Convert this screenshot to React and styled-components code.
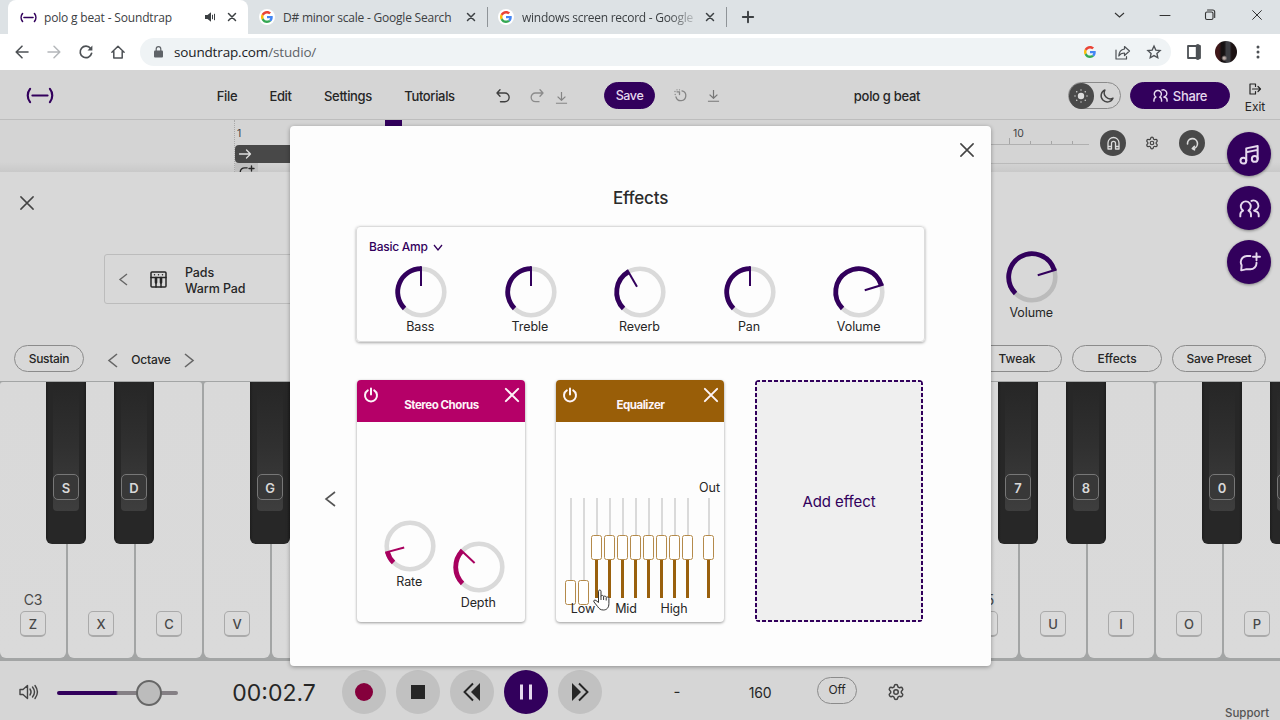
import React from "react";
import styled, { createGlobalStyle, css } from "styled-components";
import { Settings } from "lucide-react";

const purple = "#32005c";
const ink = "#262626";

const GlobalStyle = createGlobalStyle`
    * { box-sizing: border-box; }
    body {
        margin: 0;
        overflow: hidden;
        font-family: Inter, "Liberation Sans", sans-serif;
        color: ${ink};
    }
    svg { display: block; flex: none; overflow: visible; }
`

const Page = styled.div`
    position: relative;
    display: flex;
    flex-direction: column;
    width: 1280px;
    height: 720px;
    overflow: hidden;
    background: #d6d6d6;
`

/* fixed cell that centres an icon or a short text */
const Slot = styled.div`
    display: flex;
    flex: none;
    align-items: center;
    justify-content: center;
    width: ${(p) => p.$w}px;
    margin-left: ${(p) => p.$ml || 0}px;
    color: ${(p) => p.$color || "inherit"};
    ${(p) => p.$drop && css`padding-top: ${p.$drop}px;`}
`

const Label = styled.span`
    display: block;
    flex: none;
    white-space: nowrap;
    line-height: 16px;
    font-size: ${(p) => p.$size || 13}px;
    font-weight: ${(p) => p.$weight || 400};
    letter-spacing: ${(p) => p.$track || 0}px;
    color: ${(p) => p.$color || "inherit"};
`

/* ---------- icons ---------- */

const Icon = ({ size = 16, box = 24, stroke = 2, children, fill = "none", cap = "round" }) => (
    <svg width={size} height={size} viewBox={`0 0 ${box} ${box}`} fill={fill}
        stroke={fill === "none" ? "currentColor" : "none"} strokeWidth={stroke}
        strokeLinecap={cap} strokeLinejoin="round">
        {children}
    </svg>
)

const Cross = ({ size, stroke }) => (
    <Icon size={size} box={16} stroke={stroke}><path d="M1 1l14 14M15 1L1 15" /></Icon>
)

const Chevron = ({ w, h, dir, stroke = 1.6 }) => (
    <svg width={w} height={h} viewBox={`0 0 ${w} ${h}`} fill="none" stroke="currentColor" strokeWidth={stroke}>
        {dir === "left" && <path d={`M${w - 1} 1L1 ${h / 2}l${w - 2} ${h / 2 - 1}`} />}
        {dir === "right" && <path d={`M1 1l${w - 2} ${h / 2 - 1}L1 ${h - 1}`} />}
        {dir === "down" && <path d={`M1 1l${w / 2 - 1} ${h - 2}L${w - 1} 1`} />}
    </svg>
)

const Brand = ({ w, h, stroke }) => (
    <svg width={w} height={h} viewBox="0 0 30 18" fill="none" stroke={purple} strokeWidth={stroke} strokeLinecap="round">
        <path d="M4.500 2C1.200 6 1.200 12 4.500 16M25.500 2c3.300 4 3.300 10 0 14M7 9h16" />
    </svg>
)

const Google = ({ size = 12 }) => (
    <svg width={size} height={size} viewBox="0 0 48 48">
        <path fill="#EA4335" d="M24 9.500c3.540 0 6.710 1.220 9.210 3.600l6.850-6.850C35.900 2.380 30.470 0 24 0 14.620 0 6.510 5.380 2.560 13.220l7.980 6.190C12.430 13.720 17.740 9.500 24 9.500z" />
        <path fill="#4285F4" d="M46.980 24.550c0-1.570-.15-3.090-.38-4.550H24v9.020h12.940c-.58 2.960-2.260 5.480-4.780 7.180l7.730 6c4.510-4.180 7.090-10.360 7.090-17.650z" />
        <path fill="#FBBC05" d="M10.530 28.590c-.48-1.450-.76-2.990-.76-4.590s.27-3.140.76-4.590l-7.980-6.190C.92 16.460 0 20.120 0 24s.92 7.540 2.560 10.780l7.970-6.190z" />
        <path fill="#34A853" d="M24 48c6.480 0 11.930-2.130 15.890-5.810l-7.730-6c-2.150 1.450-4.920 2.300-8.160 2.300-6.260 0-11.570-4.220-13.470-9.910l-7.980 6.190C6.510 42.620 14.620 48 24 48z" />
    </svg>
)

const People = ({ size, stroke = 2 }) => (
    <Icon size={size} stroke={stroke}>
        <path d="M1.500 21v-2c0-2.400 1.200-3.600 3.200-4.600A5.700 5.700 0 1 1 10.800 14.400c1.900.8 2.900 2.200 2.900 4.600V21" />
        <path d="M14.200 3.300a5.600 5.600 0 0 1 4.300 10.600l-1.300.6c2.800.4 5.300 2 5.300 4.800V21" />
    </Icon>
)

const Download = ({ size = 14 }) => (
    <Icon size={size} box={14} stroke={1.300} cap="butt"><path d="M7 1v9M2.800 6l4.200 4 4.200-4M1 13.200h12" /></Icon>
)

const Power = () => (
    <Icon size={14} box={14} stroke={2}><path d="M7 .6v6M3.800 2.400a6 6 0 1 0 6.400 0" /></Icon>
)

const Chat = ({ size }) => (
    <Icon size={size} stroke={2.200}>
        <path d="M13 4.500H9a7 7 0 0 0-7 7c0 1.500.5 2.700 1 3.700L2.500 21l5.200-1.200H13a7 7 0 0 0 7-7v-.5" />
        <path d="M20 1.500v8M16 5.500h8" />
    </Icon>
)

/* ---------- browser ---------- */

const TabStrip = styled.div`
    display: flex;
    flex: none;
    height: 34px;
    background: #dde2e5;
    color: #3c4043;
    font-family: "Open Sans", "Noto Sans", sans-serif;
`

const Tab = styled.div`
    display: flex;
    align-items: center;
    flex: none;
    width: ${(p) => p.$w}px;
    margin-left: ${(p) => p.$ml || 0}px;
    background: ${(p) => (p.$active ? "#fff" : "transparent")};
    border-radius: 8px 8px 0 0;
`

const TabTitle = styled.div`
    flex: none;
    white-space: nowrap;
    width: ${(p) => p.$w}px;
    margin-left: 8px;
    padding-top: 1px;
    font-size: 12px;
    line-height: 18px;
    letter-spacing: ${(p) => p.$track || -0.170}px;
    ${(p) => p.$fade && css`mask-image: linear-gradient(90deg, #000 85%, transparent 104%);`}
`

const Favicon = styled.div`
    display: grid;
    place-items: center;
    width: 16px;
    height: 16px;
    border-radius: 50%;
    background: #fff;
`

const Divider = styled.div`
    width: 1px;
    height: 20px;
    margin-top: 7px;
    background: #8f9498;
`

const WindowControls = styled.div`
    display: flex;
    margin-left: auto;
    height: 30px;
    color: #333;
`

const AddressRow = styled.div`
    display: flex;
    align-items: center;
    flex: none;
    height: 36px;
    padding-left: 6px;
    background: #fff;
    color: #4d5155;
`

const Omnibox = styled.div`
    display: flex;
    align-items: center;
    width: 1031px;
    height: 28px;
    margin-left: 6px;
    padding-left: 10px;
    padding-right: 1px;
    border-radius: 14px;
    background: #eff3f5;
    font-family: "Open Sans", "Noto Sans", sans-serif;
`

const Url = styled.div`
    flex: 1;
    margin-left: 8px;
    font-size: 13.500px;
    letter-spacing: -0.150px;
    color: #5f6368;
    b { font-weight: 400; color: #202124; }
`

const Avatar = styled.div`
    width: 22px;
    height: 22px;
    border-radius: 50%;
    background:
        radial-gradient(circle at 42% 78%, #b9aaa6 0 1px, transparent 3px),
        linear-gradient(90deg, #40181a 0 18%, #151112 30% 42%, #3c3d42 52% 66%, #1b1112 76%);
`

const Browser = () => (
    <>
        <TabStrip>
            <Tab $w={240} $ml={8} $active>
                <Slot $w={16} $ml={12}><Brand w={17} h={11} stroke={2.800} /></Slot>
                <TabTitle $w={150}>polo g beat - Soundtrap</TabTitle>
                <Slot $w={16} $ml={8}>
                    <svg width="11" height="10" viewBox="0 0 11 10" fill="#3c4043">
                        <path d="M0 3h2.500L6 .3v9.400L2.500 7H0z" />
                        <path d="M7.500 2.800v4.400M9.500 1.800v6.400" stroke="#3c4043" fill="none" />
                    </svg>
                </Slot>
                <Slot $w={20} $ml={4}><Cross size={8} stroke={3} /></Slot>
            </Tab>
            <Tab $w={239}>
                <Slot $w={16} $ml={11}><Favicon><Google /></Favicon></Slot>
                <TabTitle $w={172} $track={-0.220}>D# minor scale - Google Search</TabTitle>
                <Slot $w={20} $ml={6}><Cross size={8} stroke={3} /></Slot>
            </Tab>
            <Divider />
            <Tab $w={238}>
                <Slot $w={16} $ml={10}><Favicon><Google /></Favicon></Slot>
                <TabTitle $w={172} $track={-0.270} $fade>windows screen record - Google</TabTitle>
                <Slot $w={20} $ml={6}><Cross size={8} stroke={3} /></Slot>
            </Tab>
            <Divider />
            <Slot $w={42}><Icon size={12} box={12} stroke={1.900}><path d="M6 .8v10.400M.8 6h10.400" /></Icon></Slot>
            <WindowControls>
                <Slot $w={46}><Chevron w={11} h={6} dir="down" stroke={1.100} /></Slot>
                <Slot $w={45}><Icon size={10} box={10} stroke={1}><path d="M0 5.500h10" /></Icon></Slot>
                <Slot $w={46}><Icon size={10} box={10} stroke={1.100}><rect x=".5" y="2" width="7.500" height="7.500" rx="1.500" /><path d="M2.500 0h5.200A2 2 0 0 1 9.700 2v5.500" /></Icon></Slot>
                <Slot $w={47}><Cross size={10} stroke={1.600} /></Slot>
            </WindowControls>
        </TabStrip>
        <AddressRow>
            <Slot $w={32}><Icon size={14} box={14} stroke={1.600}><path d="M13 7H1.500M7 1.200L1.200 7 7 12.800" /></Icon></Slot>
            <Slot $w={32} $color="#b4b7ba"><Icon size={14} box={14} stroke={1.500}><path d="M1 7h11.500M7 1.200L12.800 7 7 12.800" /></Icon></Slot>
            <Slot $w={32}>
                <Icon size={14} box={14} stroke={1.700}><path d="M12.600 8.300A5.800 5.800 0 1 1 11.600 3.400" /><path d="M13.400.6v4.900H8.500z" fill="currentColor" stroke="none" /></Icon>
            </Slot>
            <Slot $w={32}><Icon size={14} box={14} stroke={1.500}><path d="M.9 7.300L7 1.300l6.100 6M2.800 6.500V13h8.400V6.500" /></Icon></Slot>
            <Omnibox>
                <Slot $w={16}>
                    <svg width="9" height="12" viewBox="0 0 9 12" fill="#5f6368">
                        <rect y="4.500" width="9" height="7" rx="1" />
                        <path d="M2.200 5V3a2.300 2.300 0 0 1 4.600 0v2" fill="none" stroke="#5f6368" strokeWidth="1.200" />
                    </svg>
                </Slot>
                <Url><b>soundtrap.com</b>/studio/</Url>
                <Slot $w={32}><Google size={12} /></Slot>
                <Slot $w={32}><Icon size={15} box={15} stroke={1.200}><path d="M1 5v9h10.500v-2.500M9.500 1.500L14.500 6l-5 4.500V8C6.500 8 5 9 3.800 11 4 7 6.200 4.500 9.500 4z" /></Icon></Slot>
                <Slot $w={32}><Icon size={14} stroke={2.300}><path d="M12 1.800l3.100 6.900 7.400.8-5.500 5 1.500 7.400-6.500-3.800-6.500 3.800L7 14.500l-5.500-5 7.400-.8z" strokeLinejoin="miter" /></Icon></Slot>
            </Omnibox>
            <Slot $w={32} $ml={7}><Icon size={14} box={14} stroke={1.800}><rect x="1" y="1" width="12" height="12" /><path d="M10.800 1v12" strokeWidth="4" /></Icon></Slot>
            <Slot $w={32}><Avatar /></Slot>
            <Slot $w={32}><Icon size={14} box={14} fill="currentColor"><circle cx="7" cy="2" r="1.500" /><circle cx="7" cy="7" r="1.500" /><circle cx="7" cy="12" r="1.500" /></Icon></Slot>
        </AddressRow>
    </>
)

/* ---------- studio header ---------- */

const Header = styled.header`
    display: flex;
    align-items: center;
    flex: none;
    height: 50px;
    padding-top: 2px;
    padding-left: 25px;
    border-bottom: 1px solid #bdbdbd;
    background: #d5d5d5;
`

const Menu = styled.nav`
    display: flex;
    gap: 32px;
    margin-left: 162px;
    padding-top: 1px;
`

const Pill = styled.button`
    display: flex;
    flex: none;
    align-items: center;
    justify-content: center;
    gap: 5px;
    width: ${(p) => p.$w}px;
    height: 27px;
    margin-left: ${(p) => p.$ml || 0}px;
    margin-top: ${(p) => p.$mt || 0}px;
    padding: 0;
    border: 1px solid ${(p) => (p.$solid ? purple : "#8b8b8b")};
    border-radius: 14px;
    background: ${(p) => (p.$solid ? purple : "transparent")};
    color: ${(p) => (p.$solid ? "#e6d9ee" : ink)};
    font-family: inherit;
`

const ThemeToggle = styled.div`
    display: flex;
    width: 53px;
    height: 27px;
    margin-left: 147px;
    border: 1px solid #8a8a8a;
    border-radius: 14px;
    color: #444;
`

const ThemeKnob = styled.div`
    display: grid;
    place-items: center;
    width: 26px;
    height: 26px;
    margin: -0.500px 0 0 -0.500px;
    border-radius: 50%;
    background: #494949;
    color: #dcdcdc;
`

const Exit = styled.div`
    display: flex;
    flex-direction: column;
    align-items: center;
    gap: 4px;
    width: 24px;
    margin-left: 13px;
    padding-top: 6px;
`

const menuItems = [
    { name: "File", w: 20 },
    { name: "Edit", w: 23 },
    { name: "Settings", w: 48 },
    { name: "Tutorials", w: 51 },
]

const StudioHeader = () => (
    <Header>
        <Slot $w={30}><Brand w={30} h={17} stroke={2.300} /></Slot>
        <Menu>
            {menuItems.map((item) => (
                <Slot $w={item.w} key={item.name}><Label $weight={500} $track={-0.350}>{item.name}</Label></Slot>
            ))}
        </Menu>
        <Slot $w={16} $ml={40} $color="#3f3f3f"><Icon size={14} box={14} stroke={1.400}><path d="M4 .8L1 4l3 3.200M1.200 4h7.600a4.300 4.300 0 1 1 0 8.700H4.500" /></Icon></Slot>
        <Slot $w={16} $ml={18} $color="#8b8b8b"><Icon size={14} box={14} stroke={1.300}><path d="M10 .8L13 4l-3 3.200M12.800 4H5.500a4.300 4.300 0 1 0 0 8.700H9" /></Icon></Slot>
        <Slot $w={14} $ml={9} $color="#858585" $drop={3}><Download size={13} /></Slot>
        <Pill $w={51} $ml={36} $solid><Label $size={12.500} $weight={500} $track={-0.400}>Save</Label></Pill>
        <Slot $w={14} $ml={18} $color="#858585">
            <Icon size={13} box={13} stroke={1.300}><path d="M8 1.800A5 5 0 1 1 2 8M3 2.800h2.500v2.800" /><path d="M1.200 5.500v0M1 2.500v0M3 .8v0M5.500.8v0" /></Icon>
        </Slot>
        <Slot $w={14} $ml={19} $color="#777"><Download size={13} /></Slot>
        <Slot $w={68} $ml={133} $drop={0}><Label $weight={500} $track={-0.300}>polo g beat</Label></Slot>
        <ThemeToggle>
            <ThemeKnob>
                <Icon size={16} box={16} fill="currentColor">
                    <circle cx="8" cy="8" r="3.200" />
                    {[0, 45, 90, 135, 180, 225, 270, 315].map((a) => (
                        <circle key={a} cx="8" cy="2" r=".7" transform={`rotate(${a} 8 8)`} />
                    ))}
                </Icon>
            </ThemeKnob>
            <Slot $w={26}><Icon size={14} box={14} stroke={1.400}><path d="M5 1A6.200 6.200 0 1 0 13 9.200 6 6 0 0 1 5 1z" /></Icon></Slot>
        </ThemeToggle>
        <Pill $w={100} $ml={9} $solid>
            <People size={15} stroke={2.300} />
            <Label $weight={500} $track={-0.350}>Share</Label>
        </Pill>
        <Exit>
            <Icon size={12} box={12} stroke={1.200}><path d="M6.500 3.500V1H1v10h5.500V8.500M3.500 6h8M9 3.500L11.500 6 9 8.500" /></Icon>
            <Label $size={12}>Exit</Label>
        </Exit>
    </Header>
)

/* ---------- timeline ---------- */

const Timeline = styled.div`
    display: flex;
    flex: none;
    height: 52px;
    padding-left: 234px;
    background: linear-gradient(#d4d4d4 0 42px, #c9c9c9 52px);
`

const Track = styled.div`
    display: flex;
    flex-direction: column;
    width: 756px;
    border-left: 1px dotted #aaa;
`

const Playhead = styled.div`
    width: 17px;
    height: 6px;
    margin-left: 150px;
    background: ${purple};
`

const LoopBar = styled.div`
    display: flex;
    align-items: center;
    height: 18px;
    margin-top: 3px;
    padding-left: 4px;
    border-radius: 4px 0 0 4px;
    background: #484848;
    color: #dedede;
`

const Clip = styled.div`
    width: 23px;
    height: 9px;
    padding: 2px 4px;
    overflow: hidden;
    background: #c0c0c0;
`

const BarNumber = styled.div`
    height: 16px;
    padding-left: ${(p) => p.$pl}px;
    font-size: 10.500px;
    line-height: 16px;
    color: #444;
`

const RulerWrap = styled.div`
    display: flex;
    width: 240px;
    height: 44px;
    border-bottom: 1px solid #bababa;
`

const RulerPart = styled.div`
    width: 99px;
    height: 25px;
    padding-top: 6px;
    border-bottom: 1px solid #b0b0b0;
`

const Ticks = styled.div`
    display: flex;
    align-items: flex-end;
    gap: 20px;
    height: 6px;
    margin-top: -4px;
    padding-left: 19px;
`

const Tick = styled.div`
    width: 1px;
    height: ${(p) => p.$h}px;
    background: #a5a5a5;
`

const RoundTool = styled.div`
    display: grid;
    place-items: center;
    width: 26px;
    height: 26px;
    margin: 10px 0 0 ${(p) => p.$ml}px;
    border-radius: 50%;
    background: ${(p) => (p.$plain ? "transparent" : "#494949")};
    color: ${(p) => (p.$plain ? "#444" : "#dcdcdc")};
`

const TimelineRow = () => (
    <Timeline>
        <Track>
            <Playhead />
            <BarNumber $pl={2}>1</BarNumber>
            <LoopBar><Icon size={12} box={12} stroke={1.300}><path d="M.5 6h11M7.500 2l4 4-4 4" /></Icon></LoopBar>
            <Clip><Chat size={15} /></Clip>
        </Track>
        <RulerWrap>
            <RulerPart>
                <BarNumber $pl={23}>10</BarNumber>
                <Ticks><Tick $h={6} /><Tick $h={3} /><Tick $h={3} /><Tick $h={3} /></Ticks>
            </RulerPart>
            <RoundTool $ml={11}>
                <Icon size={13} box={13} stroke={1.300}><path d="M1 12V6a5.500 5.500 0 0 1 11 0v6H8.500V6.300a2 2 0 0 0-4 0V12zM1 9.500h3.500M8.500 9.500H12" /></Icon>
            </RoundTool>
            <RoundTool $ml={13} $plain><Settings size={14} strokeWidth={2.1} /></RoundTool>
            <RoundTool $ml={14}><Icon size={13} box={13} stroke={1.600}><path d="M1.500 7a5 5 0 1 1 5.500 4.600M8.500 9.300L6.300 11.500l2.200 1.300" /></Icon></RoundTool>
        </RulerWrap>
    </Timeline>
)

/* ---------- knobs ---------- */

const KnobBox = styled.div`
    display: flex;
    flex-direction: column;
    align-items: center;
    flex: none;
    width: 52px;
    gap: ${(p) => p.$gap || 1}px;
`

const KnobName = styled(Label)`
    margin-left: -1.500px;
`

const at = (deg, r) => {
    const a = (deg * Math.PI) / 180;
    return `${26 + r * Math.sin(a)} ${26 - r * Math.cos(a)}`;
}

const Knob = ({ name, angle, color = purple, track = "#dadada", gap }) => (
    <KnobBox $gap={gap}>
        <svg width="52" height="52" viewBox="0 0 52 52" fill="none">
            <circle cx="26" cy="26" r="23.300" stroke={track} strokeWidth="4.600" />
            <path d={`M${at(-135, 23.3)}A23.300 23.300 0 ${angle + 135 > 180 ? 1 : 0} 1 ${at(angle, 23.3)}`} stroke={color} strokeWidth="4.800" />
            <path d={`M${at(angle, 25.7)}L${at(angle, 6)}`} stroke={color} strokeWidth="2" />
        </svg>
        <KnobName $size={12.500} $track={-0.100}>{name}</KnobName>
    </KnobBox>
)

/* ---------- instrument panel ---------- */

const Panel = styled.section`
    display: flex;
    flex-direction: column;
    flex: none;
    height: 209px;
    background: #d8d8d8;
`

const PanelTop = styled.div`
    display: flex;
    height: 153px;
    padding-left: 20px;
`

const CloseBox = styled.div`
    width: 14px;
    margin-top: 24px;
    color: #444;
`

const Preset = styled.div`
    display: flex;
    align-items: center;
    width: 620px;
    height: 50px;
    margin: 82px 0 0 70px;
    padding-left: 14px;
    border: 1px solid #bcbcbc;
    border-radius: 3px;
`

const PresetName = styled.div`
    display: flex;
    flex-direction: column;
    margin-left: 18px;
    padding-top: 3px;
`

const VolumeSlot = styled.div`
    margin: 79px 0 0 282px;
`

const Controls = styled.div`
    display: flex;
    align-items: center;
    height: 45px;
    margin-top: 11px;
    padding: 0 14px;
`

const InstrumentPanel = () => (
    <Panel>
        <PanelTop>
            <CloseBox><Cross size={14} stroke={1.700} /></CloseBox>
            <Preset>
                <Slot $w={9} $color="#666"><Chevron w={9} h={13} dir="left" stroke={1.400} /></Slot>
                <Slot $w={18} $ml={21}>
                    <Icon size={17} box={17} stroke={1.500}>
                        <rect x="1" y="1" width="15" height="15" rx="1" />
                        <path d="M1 6.500h15M6 7v9M11 7v9" />
                        <path d="M6 7v4.500M11 7v4.500" strokeWidth="2.600" />
                        <path d="M4.500 3.800v0M8.500 3.800v0M12.500 3.800v0" />
                    </Icon>
                </Slot>
                <PresetName>
                    <Label $size={12.500} $weight={500} $track={-0.100}>Pads</Label>
                    <Label $size={12.500} $weight={500} $track={-0.100}>Warm Pad</Label>
                </PresetName>
            </Preset>
            <VolumeSlot><Knob name="Volume" angle={73} track="#bbb" gap={2} /></VolumeSlot>
        </PanelTop>
        <Controls>
            <Pill $w={70}><Label $size={12} $weight={500} $track={-0.300}>Sustain</Label></Pill>
            <Slot $w={11} $ml={23} $color="#666" $drop={4}><Chevron w={10} h={15} dir="left" /></Slot>
            <Slot $w={42} $ml={12} $drop={2}><Label $size={12} $weight={500} $track={-0.200}>Octave</Label></Slot>
            <Slot $w={11} $ml={11} $color="#666" $drop={4}><Chevron w={10} h={15} dir="right" /></Slot>
            <Pill $w={90} $ml={778}><Label $size={12} $weight={500} $track={-0.150}>Tweak</Label></Pill>
            <Pill $w={90} $ml={10}><Label $size={12} $weight={500} $track={-0.150}>Effects</Label></Pill>
            <Pill $w={94} $ml={10}><Label $size={12} $weight={500} $track={-0.300}>Save Preset</Label></Pill>
        </Controls>
    </Panel>
)

/* ---------- keyboard ---------- */

const Keys = styled.div`
    display: flex;
    gap: 2px;
    flex: none;
    height: 280px;
    padding: 1px 0 3px;
    overflow: hidden;
    background: #a3a5a5;
`

const WhiteKey = styled.div`
    position: relative;
    display: flex;
    flex-direction: column;
    align-items: center;
    justify-content: flex-end;
    gap: 3px;
    flex: none;
    width: 66px;
    padding-bottom: 21px;
    border-radius: 3px 3px 6px 6px;
    background: linear-gradient(#d9d9d9, #dadada);
    color: #484848;
`

const Cap = styled.div`
    display: grid;
    place-items: center;
    width: 26px;
    height: 26px;
    padding-top: 1px;
    border: 1px solid ${(p) => (p.$dark ? "#777" : "#aaa")};
    border-bottom-width: ${(p) => (p.$dark ? 1 : 2)}px;
    border-radius: 5px;
    background: ${(p) => (p.$dark ? "#383838" : "#dadada")};
`

/* sits over the seam between two white keys */
const BlackKey = styled.div`
    position: absolute;
    top: 0;
    right: -20px;
    z-index: 1;
    display: flex;
    justify-content: center;
    width: 40px;
    height: 162px;
    border-radius: 0 0 6px 6px;
    background: linear-gradient(90deg, #1e1e1e, #272727 3px 37px, #1e1e1e);
`

const KeyFace = styled.div`
    display: flex;
    align-items: flex-end;
    width: 26px;
    height: 129px;
    padding-bottom: 11px;
    border-radius: 0 0 4px 4px;
    background: linear-gradient(#262626, #303030 50%, #3e3e3e);
    color: #d8d8d8;
`

const keyCaps = ["Z", "X", "C", "V", "", "", "", "", "", "", "", "", "", "", "", "U", "I", "O", "P"];
const blackCaps = { 0: "S", 1: "D", 3: "G", 4: "", 5: "", 7: "", 8: "", 10: "", 11: "", 12: "", 14: "7", 15: "8", 17: "0", 18: "" };
const octaves = { 0: "C3", 14: "C5" };

const Keyboard = () => (
    <Keys>
        {keyCaps.map((cap, i) => (
            <WhiteKey key={i}>
                {octaves[i] && <Label $size={14} $track={-0.200}>{octaves[i]}</Label>}
                <Cap><Label $weight={500}>{cap}</Label></Cap>
                {blackCaps[i] !== undefined && (
                    <BlackKey>
                        <KeyFace><Cap $dark><Label $weight={600}>{blackCaps[i]}</Label></Cap></KeyFace>
                    </BlackKey>
                )}
            </WhiteKey>
        ))}
    </Keys>
)

/* ---------- transport ---------- */

const Transport = styled.footer`
    display: flex;
    align-items: center;
    flex: 1;
    padding-left: 18px;
    padding-top: 3px;
    background: #d6d6d6;
`

const VolumeSlider = styled.div`
    display: flex;
    align-items: center;
    width: 121px;
    height: 4px;
    margin-left: 18px;
    margin-top: 2px;
    border-radius: 2px;
    background: linear-gradient(90deg, ${purple} 59px, #858085 61px);
`

const SliderKnob = styled.div`
    width: 26px;
    height: 26px;
    margin-left: 79px;
    border: 2px solid #666;
    border-radius: 50%;
    background: #bcbcbc;
`

const PlayControls = styled.div`
    display: flex;
    gap: 10px;
    margin-left: 25px;
`

const PlayButton = styled.button`
    display: grid;
    place-items: center;
    width: 44px;
    height: 44px;
    padding: 0;
    border: 0;
    border-radius: 50%;
    background: ${(p) => (p.$active ? purple : "#c1c1c1")};
    color: ${(p) => (p.$active ? "#e6d9ee" : "#262626")};
`

const Support = styled.div`
    align-self: flex-end;
    margin-left: 320px;
    margin-bottom: -1px;
    color: #555;
`

const TransportBar = () => (
    <Transport>
        <Slot $w={21} $color="#444">
            <svg width="19" height="16" viewBox="0 0 19 16" fill="none" stroke="currentColor" strokeWidth="1.400" strokeLinejoin="round">
                <path d="M1 5.500h3l4.500-4v13L4 10.500H1z" />
                <path d="M11 5c1.300 1.800 1.300 4.200 0 6M13.500 3c2.400 3 2.400 7 0 10M16 1.500c3 4 3 9 0 13" strokeLinecap="round" />
            </svg>
        </Slot>
        <VolumeSlider><SliderKnob /></VolumeSlider>
        <Slot $w={86} $ml={53} $drop={2}><Label $size={23}>00:02.7</Label></Slot>
        <PlayControls>
            <PlayButton><Icon size={18} box={18} fill="#85003c"><circle cx="9" cy="9" r="9" /></Icon></PlayButton>
            <PlayButton><Icon size={14} box={14} fill="currentColor"><rect width="14" height="14" /></Icon></PlayButton>
            <PlayButton>
                <svg width="18" height="18" viewBox="0 0 18 18">
                    <path d="M17 0v18L8 9z" fill="currentColor" />
                    <path d="M10 .5L1.500 9l8.500 8.500" fill="none" stroke="currentColor" strokeWidth="1.900" />
                </svg>
            </PlayButton>
            <PlayButton $active><Icon size={18} box={18} stroke={3} cap="butt"><path d="M4.500 1.500v15M13.500 1.500v15" /></Icon></PlayButton>
            <PlayButton>
                <svg width="18" height="18" viewBox="0 0 18 18">
                    <path d="M1 0v18l9-9z" fill="currentColor" />
                    <path d="M8 .5L16.500 9 8 17.500" fill="none" stroke="currentColor" strokeWidth="1.900" />
                </svg>
            </PlayButton>
        </PlayControls>
        <Slot $w={20} $ml={65}><Label $size={15}>-</Label></Slot>
        <Slot $w={30} $ml={58} $drop={2}><Label $size={14} $track={-0.200}>160</Label></Slot>
        <Pill $w={40} $ml={42} $mt={-4}><Label $size={12} $track={-0.200}>Off</Label></Pill>
        <Slot $w={18} $ml={30} $color="#444"><Settings size={18} strokeWidth={2} /></Slot>
        <Support><Label $size={11.500} $weight={500}>Support</Label></Support>
    </Transport>
)

/* ---------- floating buttons ---------- */

const FloatingTools = styled.div`
    position: absolute;
    top: 132px;
    right: 9px;
    display: flex;
    flex-direction: column;
    gap: 10px;
`

const FloatingButton = styled.button`
    display: grid;
    place-items: center;
    width: 44px;
    height: 44px;
    padding: 0;
    border: 0;
    border-radius: 50%;
    background: ${purple};
    color: #e6d9ee;
    box-shadow: 0 1px 3px rgba(0, 0, 0, 0.400);
`

/* ---------- effects dialog ---------- */

const Dialog = styled.div`
    position: absolute;
    z-index: 5;
    top: 126px;
    left: 290px;
    display: flex;
    flex-direction: column;
    align-items: center;
    width: 701px;
    height: 540px;
    border-radius: 4px;
    background: #fdfdfd;
    box-shadow: 0 1px 4px rgba(0, 0, 0, 0.350);
`

const DialogClose = styled.div`
    align-self: flex-end;
    margin: 17px 17px 0 0;
    color: #444;
`

const DialogTitle = styled.h2`
    margin: 30px 0 0;
    font-size: 17px;
    font-weight: 500;
    line-height: 22px;
    letter-spacing: -0.200px;
    color: #2b2b2b;
`

const Amp = styled.section`
    width: 569px;
    height: 116px;
    margin-top: 17px;
    border: 1px solid #dcdcdc;
    border-radius: 4px;
    box-shadow: 0 1px 3px rgba(0, 0, 0, 0.350);
`

const AmpName = styled.div`
    display: flex;
    align-items: center;
    gap: 5px;
    margin: 12px 0 0 12px;
    color: ${purple};
`

const AmpKnobs = styled.div`
    display: flex;
    gap: 57.600px;
    margin: 11px 0 0 38px;
`

const EffectRow = styled.div`
    display: flex;
    align-items: center;
    align-self: flex-start;
    margin: 38px 0 0 35px;
`

const PrevButton = styled.div`
    width: 12px;
    margin-right: 20px;
    padding-bottom: 4px;
    color: #555;
`

const Card = styled.article`
    display: flex;
    flex-direction: column;
    width: 168px;
    height: 242px;
    margin-right: 31px;
    border-radius: 4px;
    overflow: hidden;
    background: #fdfdfd;
    box-shadow: 0 1px 3px rgba(0, 0, 0, 0.400);
`

const CardHead = styled.div`
    display: flex;
    justify-content: space-between;
    flex: none;
    height: 42px;
    padding: 8px 6px 0 7px;
    background: ${(p) => p.$color};
    color: #fdf4f8;
`

const CardTitle = styled.div`
    padding-top: 9px;
    text-align: center;
`

const ChorusKnobs = styled.div`
    display: flex;
    gap: 17px;
    margin: 98px 0 0 27px;
`

const Lowered = styled.div`
    padding-top: 21px;
`

const OutLabel = styled.div`
    margin: 58px 4px 0 0;
    text-align: right;
`

const Bands = styled.div`
    display: flex;
    height: 101px;
    margin: 2px 0 0 9px;
    gap: 2px;
`

const Band = styled.div`
    display: flex;
    flex-direction: column;
    align-items: center;
    width: 11px;
    margin-left: ${(p) => (p.$out ? 8 : 0)}px;
    &::before {
        content: "";
        flex: none;
        width: 2px;
        height: ${(p) => (p.$low ? 82 : 37)}px;
        background: #dadada;
    }
    &::after {
        content: "";
        flex: none;
        width: 2.500px;
        height: ${(p) => (p.$low ? 0 : 38)}px;
        background: #99600d;
    }
`

const Fader = styled.div`
    flex: none;
    width: 11px;
    height: 25px;
    border: 1.500px solid #b48a4b;
    border-radius: 2.500px;
    background: #fff;
`

const BandLabels = styled.div`
    display: flex;
    margin: 2px 0 0 14px;
`

const across = `repeating-linear-gradient(90deg, ${purple} 0 4px, transparent 4px 6px)`;
const down = `repeating-linear-gradient(${purple} 0 4px, transparent 4px 6px)`;

/* short dashes, painted on the four edges */
const AddEffect = styled.button`
    width: 168px;
    height: 242px;
    padding: 2px 0 0;
    border: 0;
    border-radius: 4px;
    background:
        ${across} 1px 0 / 100% 2px no-repeat,
        ${across} 1px 100% / 100% 2px no-repeat,
        ${down} 0 1px / 2px 100% no-repeat,
        ${down} 100% 1px / 2px 100% no-repeat,
        #efefef;
    color: ${purple};
    font-family: inherit;
`

const Pointer = styled.svg`
    position: absolute;
    left: 303px;
    top: 463px;
`

const ampKnobs = [
    { name: "Bass", angle: 0 },
    { name: "Treble", angle: 0 },
    { name: "Reverb", angle: -30 },
    { name: "Pan", angle: 0 },
    { name: "Volume", angle: 73 },
]

const bands = [1, 1, 0, 0, 0, 0, 0, 0, 0, 0];

const EffectHead = ({ title, color }) => (
    <CardHead $color={color}>
        <Power />
        <CardTitle><Label $size={11.500} $weight={700} $track={-0.450}>{title}</Label></CardTitle>
        <Cross size={14} stroke={2.300} />
    </CardHead>
)

const EffectsDialog = () => (
    <Dialog>
        <DialogClose><Cross size={14} stroke={1.800} /></DialogClose>
        <DialogTitle>Effects</DialogTitle>
        <Amp>
            <AmpName>
                <Label $size={12} $weight={500} $track={-0.250}>Basic Amp</Label>
                <Chevron w={10} h={7} dir="down" stroke={1.300} />
            </AmpName>
            <AmpKnobs>
                {ampKnobs.map((k) => <Knob key={k.name} name={k.name} angle={k.angle} />)}
            </AmpKnobs>
        </Amp>
        <EffectRow>
            <PrevButton><Chevron w={11} h={16} dir="left" stroke={1.600} /></PrevButton>
            <Card>
                <EffectHead title="Stereo Chorus" color="#b50068" />
                <ChorusKnobs>
                    <Knob name="Rate" angle={-105} color="#a8005f" gap={2} />
                    <Lowered><Knob name="Depth" angle={-47} color="#a8005f" gap={2} /></Lowered>
                </ChorusKnobs>
            </Card>
            <Card>
                <EffectHead title="Equalizer" color="#995e08" />
                <OutLabel><Label $size={12.500} $weight={400}>Out</Label></OutLabel>
                <Bands>
                    {bands.map((low, i) => <Band key={i} $low={low}><Fader /></Band>)}
                    <Band $out><Fader /></Band>
                </Bands>
                <BandLabels>
                    <Slot $w={26}><Label $size={12.500} $track={-0.100}>Low</Label></Slot>
                    <Slot $w={26} $ml={17}><Label $size={12.500} $track={-0.100}>Mid</Label></Slot>
                    <Slot $w={30} $ml={20}><Label $size={12.500} $track={-0.100}>High</Label></Slot>
                </BandLabels>
            </Card>
            <AddEffect><Label $size={15} $track={-0.100}>Add effect</Label></AddEffect>
        </EffectRow>
        <Pointer width="17" height="22" viewBox="0 0 17 22" fill="#fff" stroke="#333" strokeWidth="1" strokeLinejoin="round">
            <path d="M5.500 13.500V2.200C5.500.6 8 .6 8 2.200v5c.3-1.300 2.600-1 2.600.5.500-1 2.600-.8 2.600.8.500-.9 2.700-.7 2.700 1v5c0 4-2 6.500-5.500 6.500-3 0-4.300-1.300-5.800-3.500L1 13c-1-1.500.8-2.600 2-1.500z" />
            <path d="M8 7v4M10.600 8v3M13.200 9v2.500" fill="none" />
        </Pointer>
    </Dialog>
)

const App = () => {
    return(
        <Page>
            <GlobalStyle />
            <Browser />
            <StudioHeader />
            <TimelineRow />
            <InstrumentPanel />
            <Keyboard />
            <TransportBar />
            <FloatingTools>
                <FloatingButton>
                    <Icon size={21} stroke={2.300}><circle cx="5" cy="19" r="3.300" /><circle cx="18" cy="17" r="3.300" /><path d="M8.300 19V5l13-2.800V17M8.300 9.500l13-2.800" /></Icon>
                </FloatingButton>
                <FloatingButton><People size={21} stroke={2.200} /></FloatingButton>
                <FloatingButton><Chat size={21} /></FloatingButton>
            </FloatingTools>
            <EffectsDialog />
        </Page>
    )
}


export default App;
